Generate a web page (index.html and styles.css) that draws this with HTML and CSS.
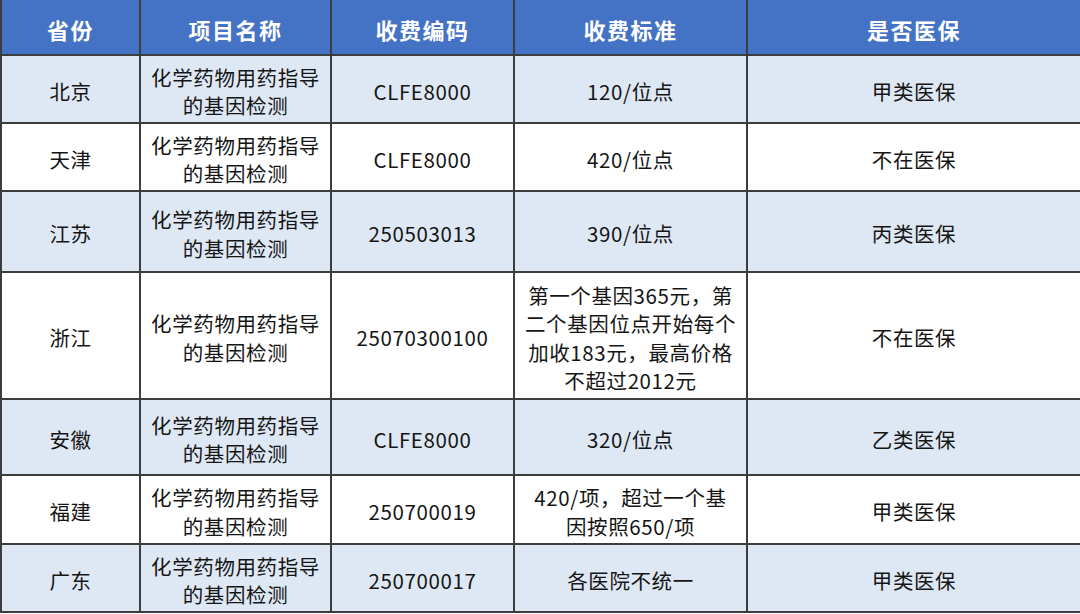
FILE: index.html
```html
<!DOCTYPE html>
<html lang="zh">
<head>
<meta charset="utf-8">
<link rel="stylesheet" href="styles.css">
</head>
<body>
<table class="fee">
  <colgroup>
    <col class="c1"><col class="c2"><col class="c3"><col class="c4"><col class="c5">
  </colgroup>
  <thead>
    <tr class="head"><th>省份</th><th>项目名称</th><th>收费编码</th><th>收费标准</th><th>是否医保</th></tr>
  </thead>
  <tbody>
    <tr class="r1 alt"><td>北京</td><td>化学药物用药指导<br>的基因检测</td><td>CLFE8000</td><td>120/位点</td><td>甲类医保</td></tr>
    <tr class="r2"><td>天津</td><td>化学药物用药指导<br>的基因检测</td><td>CLFE8000</td><td>420/位点</td><td>不在医保</td></tr>
    <tr class="r3 alt"><td>江苏</td><td>化学药物用药指导<br>的基因检测</td><td>250503013</td><td>390/位点</td><td>丙类医保</td></tr>
    <tr class="r4"><td>浙江</td><td>化学药物用药指导<br>的基因检测</td><td>25070300100</td><td>第一个基因365元，第<br>二个基因位点开始每个<br>加收183元，最高价格<br>不超过2012元</td><td>不在医保</td></tr>
    <tr class="r5 alt"><td>安徽</td><td>化学药物用药指导<br>的基因检测</td><td>CLFE8000</td><td>320/位点</td><td>乙类医保</td></tr>
    <tr class="r6"><td>福建</td><td>化学药物用药指导<br>的基因检测</td><td>250700019</td><td>420/项，超过一个基<br>因按照650/项</td><td>甲类医保</td></tr>
    <tr class="r7 alt"><td>广东</td><td>化学药物用药指导<br>的基因检测</td><td>250700017</td><td>各医院不统一</td><td>甲类医保</td></tr>
  </tbody>
</table>
</body>
</html>
```

FILE: styles.css
```css
html, body {
  margin: 0;
  padding: 0;
  background: #ffffff;
}
.fee {
  border-collapse: collapse;
  table-layout: fixed;
  width: 1080px;
  font-family: "Noto Sans CJK SC", "Noto Sans", sans-serif;
  color: #151515;
}
.c1 { width: 139px; }
.c2 { width: 191px; }
.c3 { width: 183px; }
.c4 { width: 233px; }
.c5 { width: 334px; }
.fee th, .fee td {
  border: 2px solid #3d3d3d;
  text-align: center;
  vertical-align: middle;
  padding: 4px 0 0 0;
}
.fee th {
  border-top: none;
  background: #4472c4;
  color: #ffffff;
  font-weight: 700;
  font-size: 22px;
  letter-spacing: 1.5px;
  height: 50px;
}
.fee td {
  font-size: 20.5px;
  line-height: 28.5px;
  letter-spacing: 0.6px;
}
.alt td { background: #dee8f4; }
.r1 td { height: 62px; }
.r2 td { height: 62px; }
.r3 td { height: 75px; }
.r4 td { height: 121px; }
.r5 td { height: 70px; }
.r6 td { height: 63px; }
.r7 td { height: 62px; }
```
